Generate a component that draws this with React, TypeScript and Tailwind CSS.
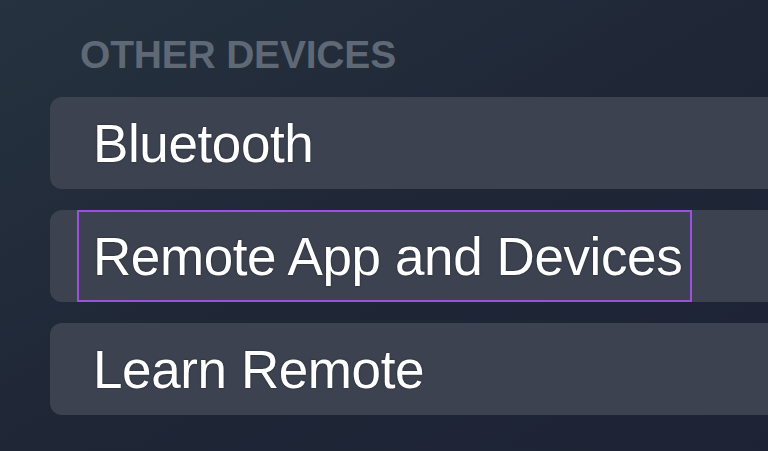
import React from 'react';

const rows = ['Bluetooth', 'Remote App and Devices', 'Learn Remote'];

const App: React.FC = () => {
  return (
    <div className="w-[768px] h-[451px] overflow-hidden bg-linear-to-br from-[#26323f] via-[#1f2737] to-[#1d2334] font-['Liberation_Sans',Arial,sans-serif]">
      <div className="pl-[50px] pt-[35px]">
        <h2 className="pl-[30px] text-[39px] leading-[39px] font-bold text-[#5f6875] tracking-[-0.2px]">
          OTHER DEVICES
        </h2>
        <ul className="mt-[23px] flex flex-col gap-[21px]">
          {rows.map((label, i) => {
            const focused = i === 1;
            return (
              <li
                key={label}
                className="h-[92px] rounded-l-[12px] bg-[#3c4250] flex items-stretch"
              >
                {focused ? (
                  <div className="ml-[27px] border-2 border-[#9d50e0] pl-[14px] pr-[8px] flex items-center">
                    <span className="text-[53px] leading-[53px] text-white tracking-[-0.4px] [text-shadow:0_0_2px_rgba(0,0,0,0.55)]">
                      {label}
                    </span>
                  </div>
                ) : (
                  <div className="pl-[43px] flex items-center">
                    <span className="text-[53px] leading-[53px] text-white tracking-[-0.4px] [text-shadow:0_0_2px_rgba(0,0,0,0.55)]">
                      {label}
                    </span>
                  </div>
                )}
              </li>
            );
          })}
        </ul>
      </div>
    </div>
  );
};

export default App;
